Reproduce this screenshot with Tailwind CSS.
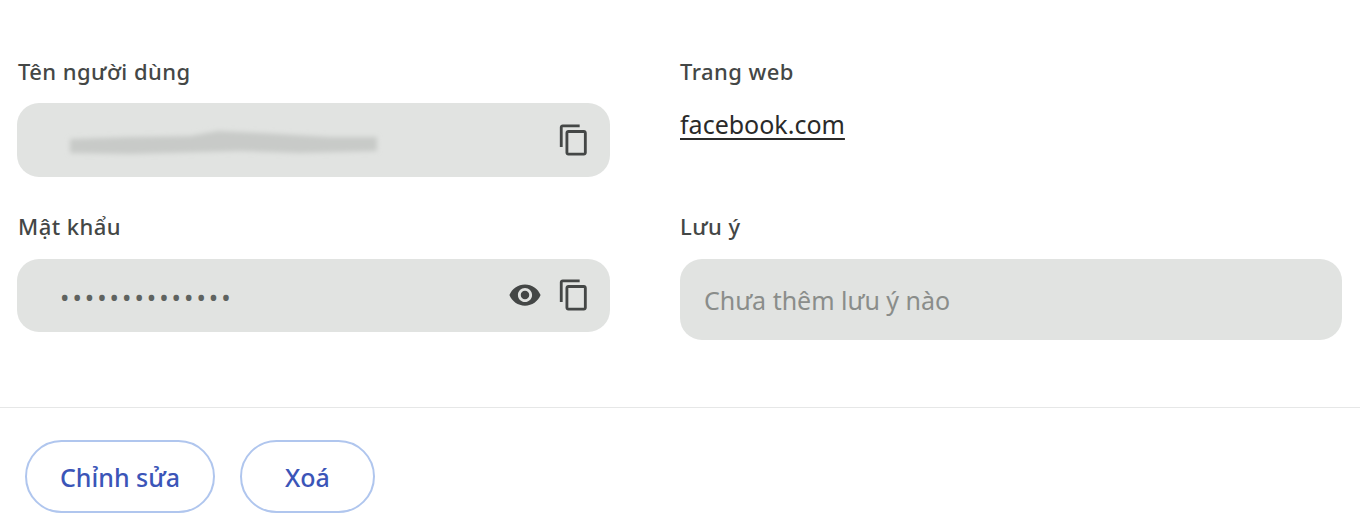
<!DOCTYPE html>
<html lang="vi">
<head>
<meta charset="utf-8">
<script src="https://cdn.jsdelivr.net/npm/@tailwindcss/browser@4"></script>
</head>
<body class="bg-white overflow-hidden font-['Noto_Sans','Open_Sans',sans-serif]">
<div class="w-[1360px] h-[515px] flex flex-col overflow-hidden">
  <div class="h-[408px] border-b border-[#e6e7e7] pt-[57px] pl-[17px] pr-[18px] flex gap-[70px] shrink-0">
    <div class="w-[593px] flex flex-col">
      <div class="h-[30px] pb-[2px] pl-px flex items-center text-[22px] font-medium tracking-[0.45px] text-[#444746]">Tên người dùng</div>
      <div class="mt-[16px] h-[74px] rounded-[22px] bg-[#e1e3e1] flex items-center pr-[19px]">
        <svg class="ml-[40px] w-[330px] h-[40px]" viewBox="57 120 330 40">
          <defs><filter id="smear" x="-10%" y="-50%" width="120%" height="200%"><feGaussianBlur stdDeviation="2.8"/></filter></defs>
          <path filter="url(#smear)" fill="#c8cac8" d="M70 139 130 137 190 136 218 131 262 133 330 137 377 137 377 151 300 153 240 151 130 154 70 153Z"/>
        </svg>
        <svg class="ml-auto w-[34px] h-[34px]" viewBox="0 0 24 24" fill="#444746"><path d="M16 1H4c-1.100 0-2 .9-2 2v14h2V3h12V1zm3 4H8c-1.100 0-2 .9-2 2v14c0 1.100.9 2 2 2h11c1.100 0 2-.9 2-2V7c0-1.100-.9-2-2-2zm0 16H8V7h11v14z"/></svg>
      </div>
      <div class="mt-[35px] h-[30px] pb-[2px] pl-px flex items-center text-[22px] font-medium tracking-[0.45px] text-[#444746]">Mật khẩu</div>
      <div class="mt-[17px] h-[73px] rounded-[22px] bg-[#e1e3e1] flex items-center pr-[19px]">
        <div class="ml-[43px] pt-[3px] text-[#5f6360] text-[25px] tracking-[3px] leading-none">••••••••••••••</div>
        <svg class="ml-auto mb-[2px] w-[34px] h-[34px]" viewBox="0 0 24 24" fill="#444746"><path d="M12 4.500C7 4.500 2.730 7.610 1 12c1.730 4.390 6 7.500 11 7.500s9.270-3.110 11-7.500c-1.730-4.390-6-7.500-11-7.500zM12 17c-2.760 0-5-2.240-5-5s2.240-5 5-5 5 2.240 5 5-2.240 5-5 5zm0-8c-1.660 0-3 1.340-3 3s1.340 3 3 3 3-1.340 3-3-1.340-3-3-3z"/></svg>
        <svg class="ml-[15px] mb-[2px] w-[34px] h-[34px]" viewBox="0 0 24 24" fill="#444746"><path d="M16 1H4c-1.100 0-2 .9-2 2v14h2V3h12V1zm3 4H8c-1.100 0-2 .9-2 2v14c0 1.100.9 2 2 2h11c1.100 0 2-.9 2-2V7c0-1.100-.9-2-2-2zm0 16H8V7h11v14z"/></svg>
      </div>
    </div>
    <div class="w-[662px] flex flex-col">
      <div class="h-[30px] pb-[2px] flex items-center text-[22px] font-medium tracking-[0.45px] text-[#444746]">Trang web</div>
      <a class="mt-[20px] h-[36px] flex items-center self-start text-[25px] text-[#2a2a2a] underline underline-offset-[4px] decoration-[1.500px]">facebook.com</a>
      <div class="mt-[69px] h-[30px] pb-[2px] flex items-center text-[22px] font-medium tracking-[0.45px] text-[#444746]">Lưu ý</div>
      <div class="mt-[17px] h-[81px] rounded-[22px] bg-[#e1e3e1] flex items-center pl-[24px] pt-[3px] text-[25px] text-[#8a8d8a]">Chưa thêm lưu ý nào</div>
    </div>
  </div>
  <div class="pt-[32px] pl-[25px] flex gap-[25px]">
    <button class="w-[190px] h-[73px] pt-[2px] rounded-full border-2 border-[#b0c6ee] text-[#3b55b8] text-[25px] font-medium">Chỉnh sửa</button>
    <button class="w-[135px] h-[73px] pt-[2px] rounded-full border-2 border-[#b0c6ee] text-[#3b55b8] text-[25px] font-medium">Xoá</button>
  </div>
</div>
</body>
</html>
